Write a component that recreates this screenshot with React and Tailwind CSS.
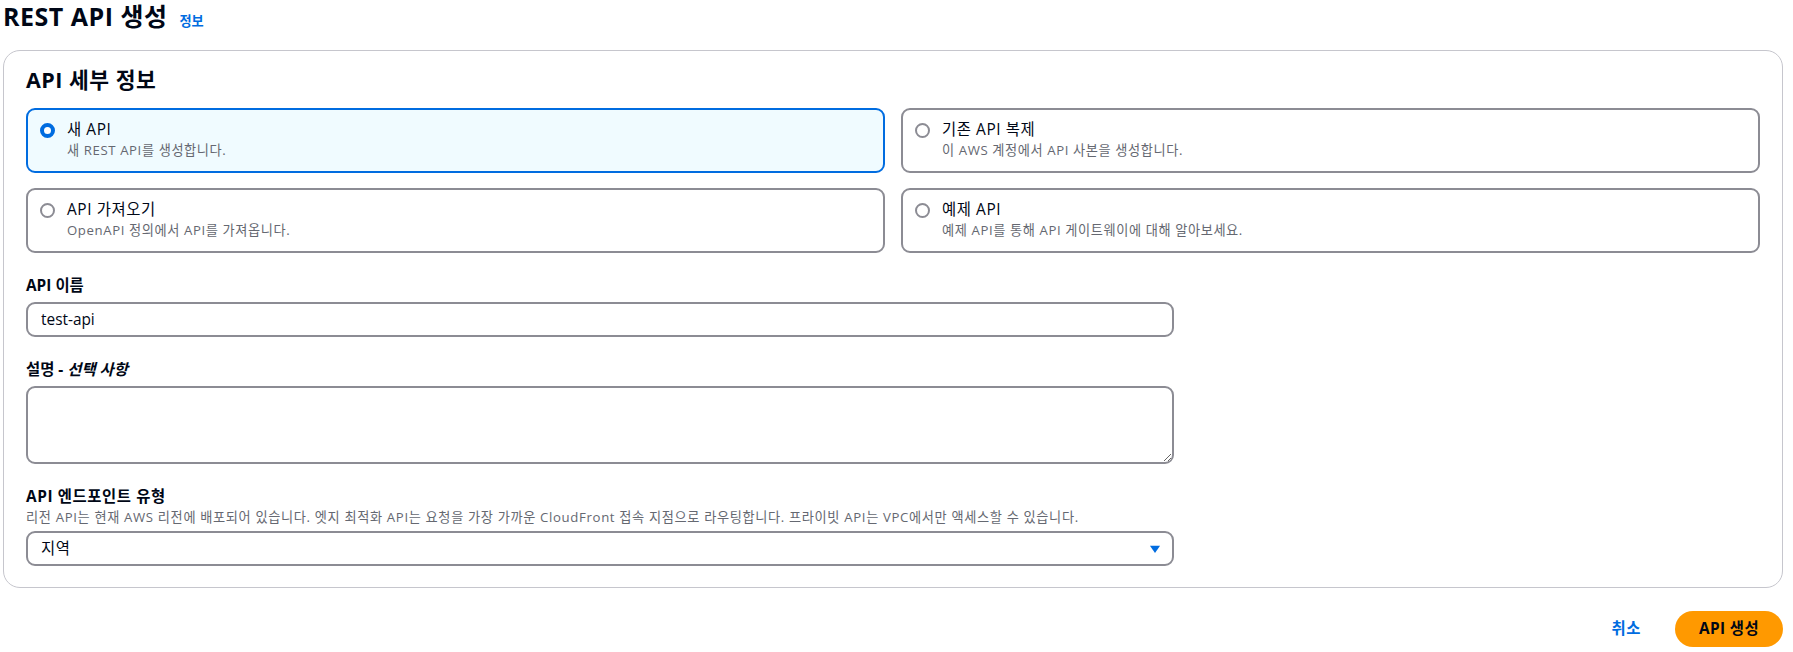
import { useState } from "react";

const options = [
  { id: "new", title: "새 API", desc: "새 REST API를 생성합니다." },
  { id: "clone", title: "기존 API 복제", desc: "이 AWS 계정에서 API 사본을 생성합니다." },
  { id: "import", title: "API 가져오기", desc: "OpenAPI 정의에서 API를 가져옵니다." },
  { id: "example", title: "예제 API", desc: "예제 API를 통해 API 게이트웨이에 대해 알아보세요." },
];

function Radio({ checked }) {
  return checked ? (
    <span className="block h-[15px] w-[15px] shrink-0 rounded-full border-[4.5px] border-[#006ce0] bg-white" />
  ) : (
    <span className="block h-[15px] w-[15px] shrink-0 rounded-full border-2 border-[#8c8c94] bg-white" />
  );
}

function Tile({ option, selected, onSelect }) {
  const active = selected === option.id;
  return (
    <button
      type="button"
      onClick={() => onSelect(option.id)}
      className={
        active
          ? "flex h-[65px] items-start gap-[12px] rounded-[9px] border-2 border-[#006ce0] bg-[#f0fbff] pl-[12px] pr-4 pt-[9px] text-left"
          : "flex h-[65px] items-start gap-[12px] rounded-[9px] border-2 border-[#8c8c94] bg-white pl-[12px] pr-4 pt-[9px] text-left"
      }
    >
      <span className="mt-[3.5px]">
        <Radio checked={active} />
      </span>
      <span className="flex flex-col">
        <span className="text-[15.4px] leading-[22px] tracking-[0.6px] text-[#000716]">{option.title}</span>
        <span className="text-[13.2px] leading-[18px] tracking-[0.6px] text-[#656871]">{option.desc}</span>
      </span>
    </button>
  );
}

export default function App() {
  const [selected, setSelected] = useState("new");
  const [name, setName] = useState("test-api");

  return (
    <div
      className="min-h-screen bg-white pl-[3px] pr-[10px] text-[#000716]"
      style={{ fontFamily: '"Open Sans", "Noto Sans CJK KR", sans-serif' }}
    >
      <div className="flex items-baseline gap-[12px]">
        <h1 className="text-[25px] font-bold leading-[33px] tracking-[0.5px]">REST API 생성</h1>
        <a className="text-[13.2px] font-bold text-[#006ce0]">정보</a>
      </div>

      <div className="mt-[17px] rounded-[17px] border border-[#c6c6cd] bg-white px-[22px] pb-[21px] pt-[16px]">
        <h2 className="text-[21.5px] font-bold leading-[26px] tracking-[0.5px]">API 세부 정보</h2>

        <div className="mt-[15px] grid grid-cols-2 gap-x-[16px] gap-y-[15px]">
          {options.map((o) => (
            <Tile key={o.id} option={o} selected={selected} onSelect={setSelected} />
          ))}
        </div>

        <div className="mt-[22px] w-[1148px]">
          <label className="block text-[15.4px] font-bold leading-[22px]">API 이름</label>
          <input
            value={name}
            onChange={(e) => setName(e.target.value)}
            className="mt-[5px] block h-[35px] w-full rounded-[9px] border-2 border-[#8c8c94] bg-white px-[13px] text-[15.4px] text-[#000716] outline-none"
          />
        </div>

        <div className="mt-[22px] w-[1148px]">
          <label className="block text-[15.4px] font-bold leading-[22px]">
            설명 - <i>선택 사항</i>
          </label>
          <textarea className="mt-[5px] block h-[78px] w-full rounded-[9px] border-2 border-[#8c8c94] bg-white px-[13px] py-[6px] text-[15.4px] outline-none" />
        </div>

        <div className="mt-[22px]">
          <label className="block text-[15.4px] font-bold leading-[22px] tracking-[0.6px]">API 엔드포인트 유형</label>
          <p className="text-[13.2px] leading-[18px] tracking-[0.65px] text-[#656871]">
            리전 API는 현재 AWS 리전에 배포되어 있습니다. 엣지 최적화 API는 요청을 가장 가까운 CloudFront 접속 지점으로 라우팅합니다. 프라이빗 API는 VPC에서만 액세스할 수 있습니다.
          </p>
          <div className="mt-[5px] flex h-[35px] w-[1148px] items-center justify-between rounded-[9px] border-2 border-[#8c8c94] bg-white pl-[13px] pr-[8px]">
            <span className="text-[15.4px] tracking-[0.6px]">지역</span>
            <svg width="18" height="18" viewBox="0 0 16 16" className="block">
              <path d="M3.5 5h9L8 11.5z" fill="#006ce0" />
            </svg>
          </div>
        </div>
      </div>

      <div className="mt-[23px] flex items-center justify-end">
        <button type="button" className="h-[36px] px-[20px] text-[15.4px] font-bold tracking-[0.5px] text-[#006ce0]">
          취소
        </button>
        <button
          type="button"
          className="ml-[14px] h-[36px] rounded-full bg-[#ff9900] px-[24px] text-[15.4px] font-bold tracking-[0.4px] text-[#000716]"
        >
          API 생성
        </button>
      </div>
    </div>
  );
}
